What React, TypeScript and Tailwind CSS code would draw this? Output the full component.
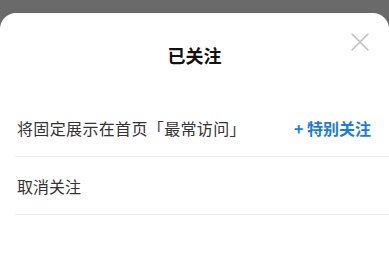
import React from "react";

export default function App() {
  return (
    <div
      className="w-[389px] h-[256px] bg-[#6a6a6a] pt-[13px] overflow-hidden"
      style={{ fontFamily: '"Noto Sans CJK SC", "Noto Sans", sans-serif' }}
    >
      <div className="relative h-[243px] bg-white rounded-t-[16px]">
        <div className="h-[86px] pt-[29px] flex justify-center">
          <span className="text-[18px] leading-[26px] font-bold text-[#111]">已关注</span>
        </div>
        <button className="absolute right-[19px] top-[19px] w-[20px] h-[20px] flex items-center justify-center">
          <svg width="20" height="20" viewBox="0 0 20 20" fill="none">
            <path d="M2 2L18 18M18 2L2 18" stroke="#bdbdbd" strokeWidth="1.5" strokeLinecap="round" />
          </svg>
        </button>
        <div className="ml-[15px]">
          <div className="h-[58px] flex items-center justify-between border-b border-[#ececec] pr-[18px]">
            <span className="ml-[2px] text-[16px] tracking-[0.35px] text-[#333]">将固定展示在首页「最常访问」</span>
            <span className="text-[16px] font-bold text-[#1a7be6]">+ 特别关注</span>
          </div>
          <div className="h-[58px] flex items-center border-b border-[#ececec]">
            <span className="ml-[2px] text-[16px] text-[#333]">取消关注</span>
          </div>
        </div>
      </div>
    </div>
  );
}
